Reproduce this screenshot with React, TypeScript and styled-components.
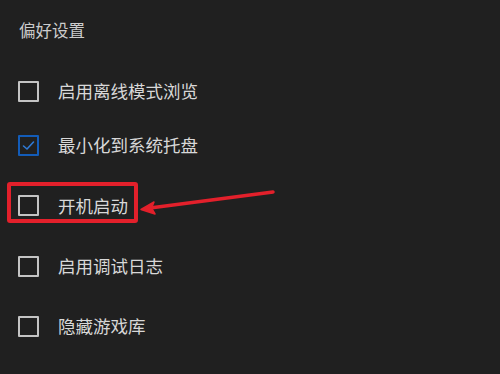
import React from "react";
import styled, { createGlobalStyle } from "styled-components";

const GlobalStyle = createGlobalStyle`
  html, body {
    margin: 0;
    padding: 0;
    background: #202020;
  }
  body {
    font-family: "Noto Sans CJK SC", "Noto Sans", sans-serif;
  }
`;

const Page = styled.div`
  position: relative;
  width: 500px;
  height: 374px;
  padding: 18px 0 0 18px;
  box-sizing: border-box;
  background: #202020;
  overflow: hidden;
`;

const Title = styled.div`
  font-size: 16.5px;
  line-height: 24px;
  color: #cccccc;
  padding-left: 1px;
  margin-bottom: 25px;
`;

const List = styled.div`
  display: flex;
  flex-direction: column;
`;

const Row = styled.label<{ height: number }>`
  position: relative;
  display: flex;
  align-items: center;
  gap: 19px;
  height: ${p => p.height}px;
  cursor: pointer;
`;

const Box = styled.span<{ checked: boolean }>`
  width: 21px;
  height: 21px;
  box-sizing: border-box;
  border: 2px solid ${p => (p.checked ? "#135cb8" : "#c4c4c4")};
  border-radius: 1px;
  display: flex;
  align-items: center;
  justify-content: center;
  flex-shrink: 0;
`;

const Label = styled.span`
  font-size: 17.5px;
  line-height: 24px;
  color: #d8d8d8;
`;

const Highlight = styled.div`
  position: absolute;
  left: -11px;
  top: 7px;
  width: 131px;
  height: 41px;
  box-sizing: border-box;
  border: 4px solid #e3202b;
  border-radius: 3px;
  pointer-events: none;
`;

const Arrow = styled.svg`
  position: absolute;
  left: 0;
  top: 0;
  pointer-events: none;
`;

const items = [
  { text: "启用离线模式浏览", checked: false, height: 48 },
  { text: "最小化到系统托盘", checked: true, height: 60 },
  { text: "开机启动", checked: false, height: 61, marked: true },
  { text: "启用调试日志", checked: false, height: 60 },
  { text: "隐藏游戏库", checked: false, height: 60 },
];

const Check = () => (
  <svg width="13" height="11" viewBox="0 0 13 11">
    <path d="M1.5 6 L5 9 L11.5 2" fill="none" stroke="#2f7ad6" strokeWidth="1.6" strokeLinecap="round" strokeLinejoin="round" />
  </svg>
);

export default function App() {
  return (
    <Page>
      <GlobalStyle />
      <Title>偏好设置</Title>
      <List>
        {items.map(item => (
          <Row key={item.text} height={item.height}>
            <Box checked={item.checked}>{item.checked && <Check />}</Box>
            <Label>{item.text}</Label>
            {item.marked && <Highlight />}
          </Row>
        ))}
      </List>
      <Arrow width="500" height="374" viewBox="0 0 500 374">
        <line x1="273" y1="192" x2="150" y2="208" stroke="#e3202b" strokeWidth="3.5" strokeLinecap="round" />
        <path d="M141 209.5 L154 202 L151.5 208 L155 214 Z" fill="#e3202b" stroke="#e3202b" strokeWidth="1.5" strokeLinejoin="round" />
      </Arrow>
    </Page>
  );
}
